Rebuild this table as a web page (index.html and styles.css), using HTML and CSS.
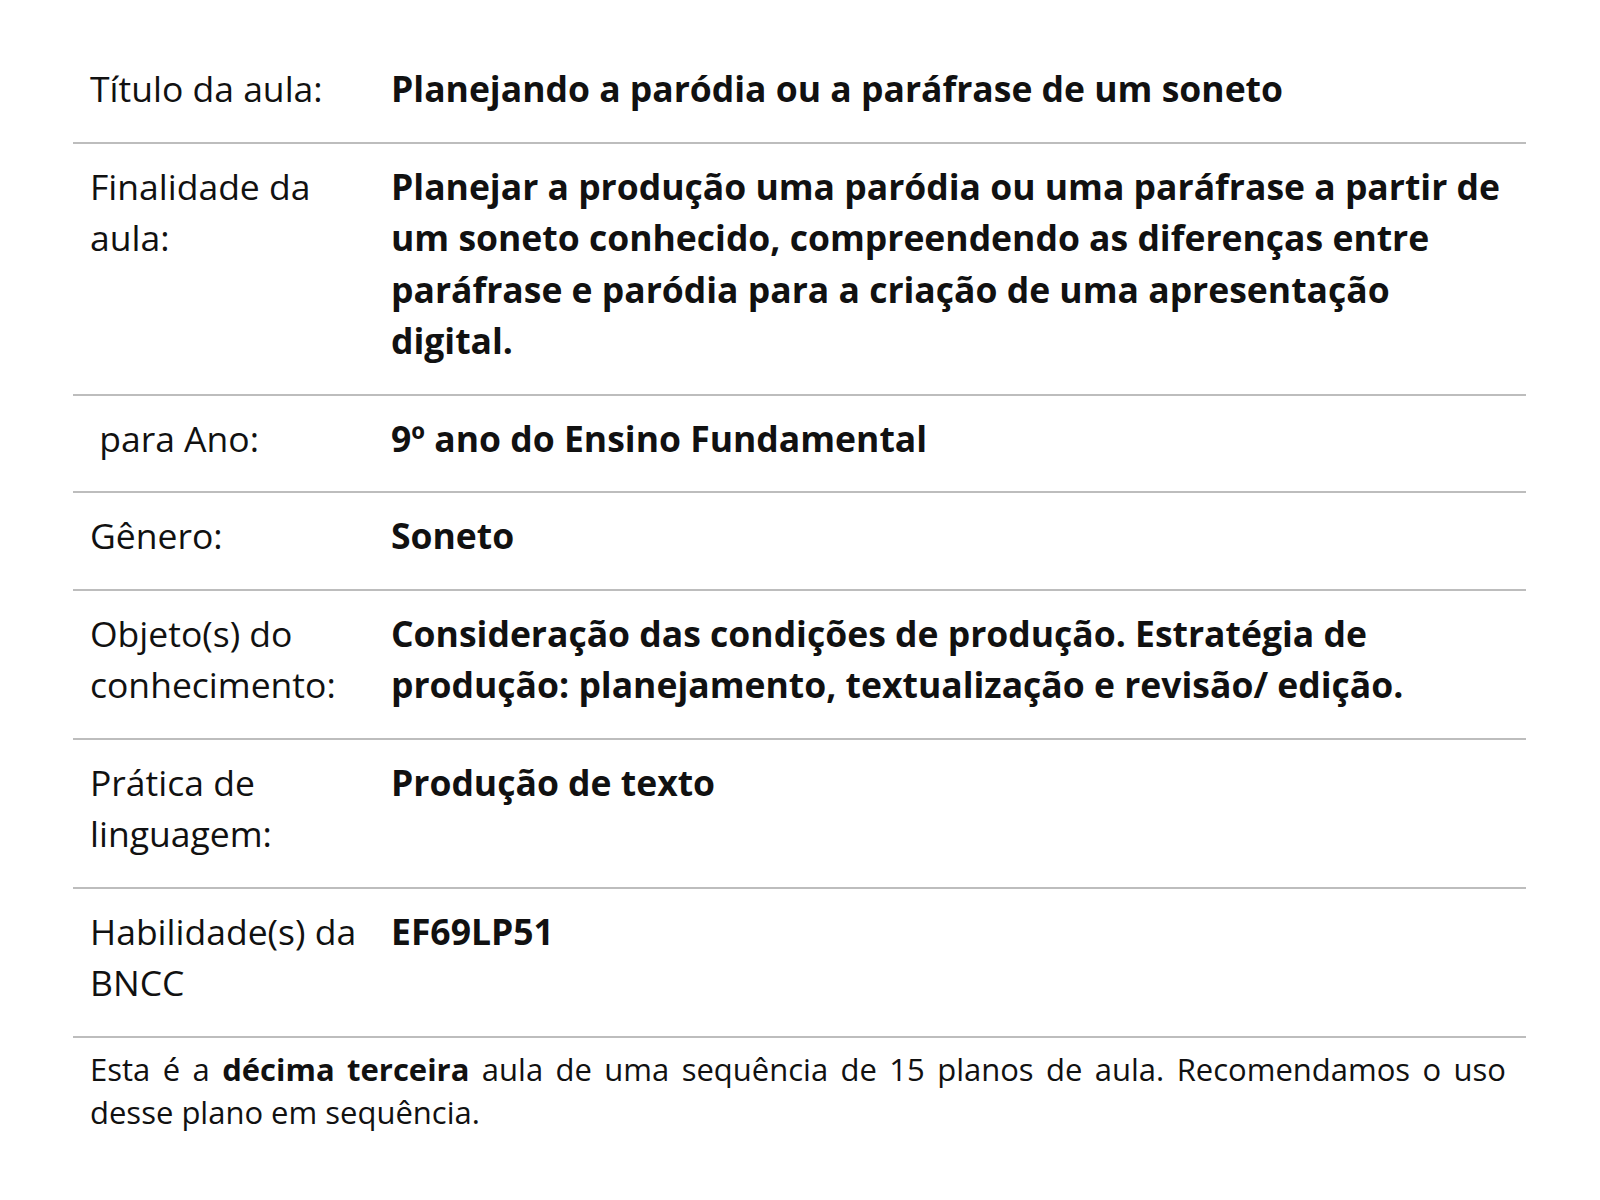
FILE: index.html
```html
<!DOCTYPE html>
<html lang="pt">
<head>
<meta charset="utf-8">
<link rel="stylesheet" href="styles.css">
</head>
<body>
<div class="plan">
  <div class="row">
    <div class="label">Título da aula:</div>
    <div class="value">Planejando a paródia ou a paráfrase de um soneto</div>
  </div>
  <div class="row">
    <div class="label">Finalidade da aula:</div>
    <div class="value">Planejar a produção uma paródia ou uma paráfrase a partir de um soneto conhecido, compreendendo as diferenças entre paráfrase e paródia para a criação de uma apresentação digital.</div>
  </div>
  <div class="row">
    <div class="label">&nbsp;para Ano:</div>
    <div class="value">9º ano do Ensino Fundamental</div>
  </div>
  <div class="row">
    <div class="label">Gênero:</div>
    <div class="value">Soneto</div>
  </div>
  <div class="row">
    <div class="label">Objeto(s) do conhecimento:</div>
    <div class="value">Consideração das condições de produção. Estratégia de produção: planejamento, textualização e revisão/ edição.</div>
  </div>
  <div class="row">
    <div class="label">Prática de linguagem:</div>
    <div class="value">Produção de texto</div>
  </div>
  <div class="row">
    <div class="label">Habilidade(s) da BNCC</div>
    <div class="value">EF69LP51</div>
  </div>
  <p class="note">Esta é a <strong>décima terceira</strong> aula de uma sequência de 15 planos de aula. Recomendamos o uso desse plano em sequência.</p>
</div>
</body>
</html>
```

FILE: styles.css
```css
html, body {
  margin: 0;
  padding: 0;
  background: #ffffff;
}

body {
  font-family: "Open Sans", "Liberation Sans", sans-serif;
  color: #111111;
}

.plan {
  width: 1453px;
  margin: 46px 0 0 73px;
}

.row {
  display: grid;
  grid-template-columns: 318px 1fr;
  border-bottom: 2px solid #bdbdbd;
  padding: 17px 0 27px 0;
  font-size: 35.5px;
  line-height: 51.5px;
}

.label {
  padding-left: 17px;
  padding-right: 16px;
  font-weight: 400;
}

.value {
  font-weight: 700;
  padding-right: 20px;
}

.note {
  margin: 0;
  padding: 10px 20px 0 17px;
  font-size: 31px;
  line-height: 43px;
  text-align: justify;
}

.note strong {
  font-weight: 700;
}
```
